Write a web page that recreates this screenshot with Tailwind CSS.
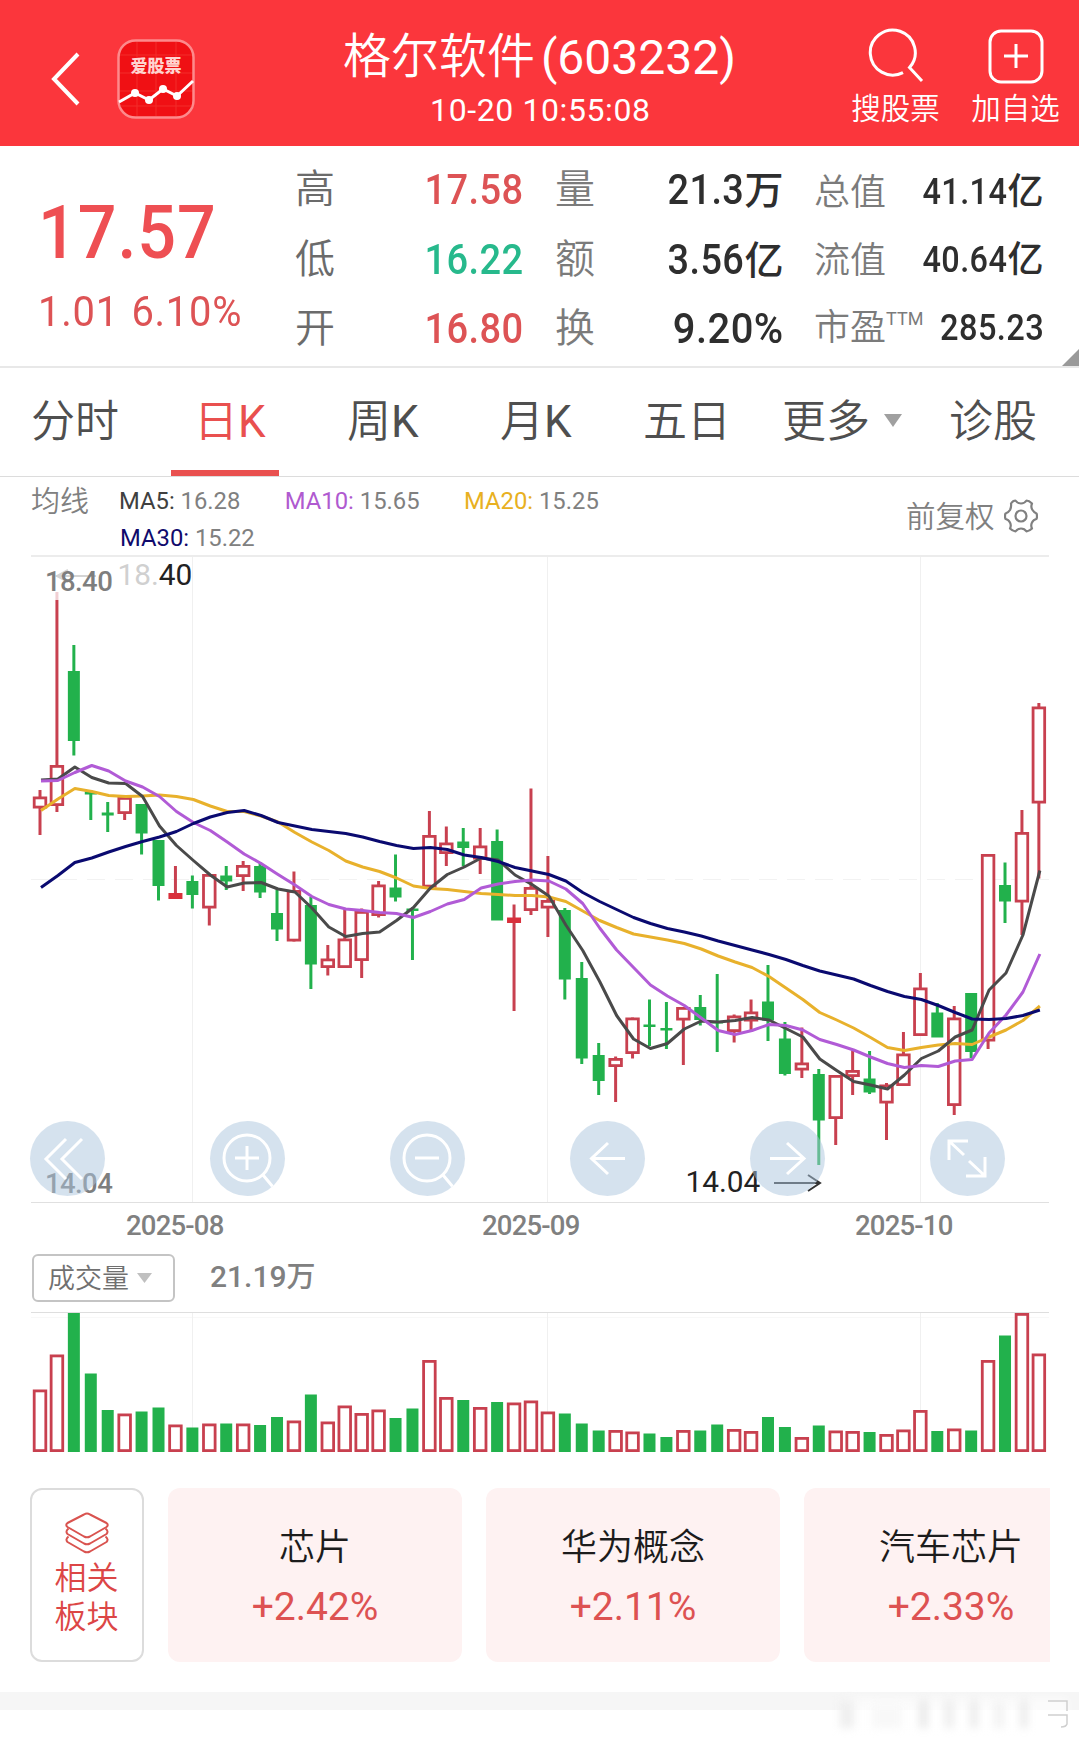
<!DOCTYPE html>
<html lang="zh-CN">
<head>
  <meta charset="UTF-8">
  <title>格尔软件(603232)</title>
  <script src="https://cdn.jsdelivr.net/npm/@tailwindcss/browser@4"></script>
</head>
<body class="bg-white font-[Roboto,'Noto_Sans_CJK_SC',sans-serif] w-[1079px] h-[1738px] overflow-hidden">

  <!-- header -->
  <header class="flex h-[146px] bg-[#fb363c] text-white">
    <div class="w-[240px] flex items-center pt-3 pl-[50px]">
      <svg class="w-[32px] h-[56px]" viewBox="0 0 32 56" fill="none" stroke="#fff" stroke-width="4"><path d="M28 3L4 28L28 53"/></svg>
      <svg class="w-[78px] h-[80px] ml-[35px]" viewBox="0 0 78 80">
        <rect x="1.5" y="1.5" width="75" height="77" rx="17" fill="#f01014" stroke="#fd8a8c" stroke-width="2.5"/>
        <path d="M20 3V77M39 3V77M59 3V77M3 16H75M3 34H75M3 52H75M3 67H75" stroke="#f5403a" stroke-width="1" opacity=".6"/>
        <text x="39" y="33" text-anchor="middle" font-size="17" font-weight="900" fill="#ffd4d0" font-family="Noto Sans CJK SC">爱股票</text>
        <path d="M2 63L18 54L32 61L46 50L60 57L76 42" fill="none" stroke="#fff" stroke-width="3"/>
        <g fill="#fff"><circle cx="18" cy="54" r="4"/><circle cx="32" cy="61" r="4"/><circle cx="46" cy="50" r="4"/><circle cx="60" cy="57" r="4"/></g>
      </svg>
    </div>
    <div class="w-[600px] flex flex-col items-center pt-6">
      <h1 class="text-[48px] leading-[66px] font-[350] flex"><span>格尔软件</span><span class="pl-[6px] pt-px font-normal">(603232)</span></h1>
      <div class="text-[32px] leading-[40px] tracking-[0.6px] -mt-[1px] pl-[2px]">10-20 10:55:08</div>
    </div>
    <div class="flex pt-[28px]">
      <div class="w-[113px] flex flex-col items-center">
        <svg class="w-[56px] h-[56px]" viewBox="0 0 56 56" fill="none" stroke="#fff" stroke-width="3"><path d="M35 44.6A22.5 22.5 0 1 1 41.5 39.6L54 53"/></svg>
        <span class="text-[29.5px] leading-[44px] mt-[3px] font-[350]">搜股票</span>
      </div>
      <div class="w-[127px] flex flex-col items-center">
        <svg class="w-[56px] h-[56px]" viewBox="0 0 56 56" fill="none" stroke="#fff" stroke-width="3"><rect x="2" y="3" width="52" height="51" rx="11"/><path d="M28 16V40M16 28H40"/></svg>
        <span class="text-[29.5px] leading-[44px] mt-[3px] font-[350]">加自选</span>
      </div>
    </div>
  </header>

  <!-- quote -->
  <section class="relative flex h-[222px] border-b-2 border-[#e8e8e8] text-[#2e2e2e]">
    <div class="w-[295px] pl-[38px] pt-[41px] text-[#ee4f53]">
      <div class="text-[75px] leading-[90px] font-medium tracking-[1px] origin-left scale-x-[.91]">17.57</div>
      <div class="text-[42px] leading-[56px] mt-[7px] tracking-[0.8px] origin-left scale-x-[.95] text-[#dd5355] whitespace-nowrap">1.01 <span class="ml-[2px]">6.10%</span></div>
    </div>
    <div class="w-[229px] pt-[9px] text-[42px] font-medium tracking-[0.5px]">
      <div class="flex justify-between items-center h-[69.5px]"><span class="text-[40px] font-[350] text-[#6b6b6b] pt-px">高</span><span class="origin-right scale-x-[.905] text-[#dd5355]">17.58</span></div>
      <div class="flex justify-between items-center h-[69.5px]"><span class="text-[40px] font-[350] text-[#6b6b6b] pt-px">低</span><span class="origin-right scale-x-[.905] text-[#27b98c]">16.22</span></div>
      <div class="flex justify-between items-center h-[69.5px]"><span class="text-[40px] font-[350] text-[#6b6b6b] pt-px">开</span><span class="origin-right scale-x-[.905] text-[#dd5355]">16.80</span></div>
    </div>
    <div class="w-[229px] ml-[31px] pt-[9px] text-[42px] font-medium tracking-[0.5px]">
      <div class="flex justify-between items-center h-[69.5px]"><span class="text-[40px] font-[350] text-[#7b7b7b] pt-px">量</span><span><span class="inline-block origin-right scale-x-[.9]">21.3</span><span class="text-[39px]">万</span></span></div>
      <div class="flex justify-between items-center h-[69.5px]"><span class="text-[40px] font-[350] text-[#7b7b7b] pt-px">额</span><span><span class="inline-block origin-right scale-x-[.9]">3.56</span><span class="text-[39px]">亿</span></span></div>
      <div class="flex justify-between items-center h-[69.5px]"><span class="text-[40px] font-[350] text-[#7b7b7b] pt-px">换</span><span class="origin-right scale-x-[.95]">9.20%</span></div>
    </div>
    <div class="w-[230px] ml-[30px] pt-[12px] text-[36px] font-medium tracking-[0.5px]">
      <div class="flex justify-between items-center h-[68px]"><span class="font-[350] text-[#7b7b7b] tracking-normal pt-px">总值</span><span><span class="inline-block origin-right scale-x-[.9]">41.14</span>亿</span></div>
      <div class="flex justify-between items-center h-[68px]"><span class="font-[350] text-[#7b7b7b] tracking-normal pt-px">流值</span><span><span class="inline-block origin-right scale-x-[.9]">40.64</span>亿</span></div>
      <div class="flex justify-between items-center h-[68px]"><span class="font-[350] text-[#7b7b7b] tracking-normal flex">市盈<span class="text-[18px] leading-[36px] font-normal">TTM</span></span><span class="origin-right scale-x-[.905]">285.23</span></div>
    </div>
    <svg class="absolute right-0 bottom-0 w-[17px] h-[17px]" viewBox="0 0 17 17"><path d="M17 0V17H0z" fill="#999"/></svg>
  </section>

  <!-- period tabs -->
  <nav class="flex h-[109px] border-b border-[#dcdcdc] text-[44px] font-[350] text-[#4f4f4f] leading-[108px] whitespace-nowrap">
    <div class="w-[171px] pl-[31px]">分时</div>
    <div class="w-[108px] h-[108px] border-b-[6px] border-[#e9504f] text-[#e9504f] pl-[23px]">日<span class="font-normal">K</span></div>
    <div class="w-[152px] pl-[68px]">周<span class="font-normal">K</span></div>
    <div class="w-[152px] pl-[69px]">月<span class="font-normal">K</span></div>
    <div class="w-[199px] pl-[60px]">五日</div>
    <div class="w-[167px] flex items-center h-[108px]">更多<svg class="w-[18px] h-[14px] ml-[14px] mb-[2px]" viewBox="0 0 18 14"><path d="M0 0H18L9 13z" fill="#a0a0a0"/></svg></div>
    <div>诊股</div>
  </nav>

  <!-- moving averages -->
  <section class="flex h-[78px] px-[31px] text-[23.8px] text-[#808080]">
    <div class="w-[88px] text-[29px] font-[350] leading-[50px]">均线</div>
    <div class="w-[760px] pt-[6px]">
      <div class="flex gap-[44.5px] leading-[37px]">
        <div><span class="text-[#404040]">MA5:</span> 16.28</div>
        <div><span class="text-[#b05ad0]">MA10:</span> 15.65</div>
        <div><span class="text-[#e8b021]">MA20:</span> 15.25</div>
      </div>
      <div class="leading-[37px] pl-px"><span class="text-[#100a6c]">MA30:</span> 15.22</div>
    </div>
    <div class="flex items-center text-[29.5px] font-[350] pl-[27px] pt-[2px]">
      <span class="whitespace-nowrap">前复权</span>
      <svg class="w-[34px] h-[34px] ml-[9px] mb-[2px] shrink-0" viewBox="0 0 34 34" fill="none" stroke="#808080" stroke-width="2.2"><circle cx="17" cy="17" r="5.5"/><path stroke-linejoin="round" d="M7 4.5Q9 1.500 11.500 1.500Q13.500 4.500 17 4.500Q20.500 4.500 22.500 1.500Q25 1.500 28 4.500Q26.500 8 28.500 11Q30 13.500 32.500 14.500Q33.500 17 32.500 20Q29.500 20.500 28 23.500Q26.500 26.500 28 29.500Q25.500 32 22.500 32.500Q20.500 29.500 17 29.500Q13.500 29.500 11.500 32.500Q8.500 32 6 29.500Q7.500 26.500 6 23.500Q4.500 20.500 1.500 20Q.5 17 1.500 14.500Q4.500 13.500 6 11Q7.500 8 7 4.500z"/></svg>
    </div>
  </section>

  <!-- candles -->
  <section class="relative h-[649px] px-[31px]">
    <svg id="kline" class="w-[1018px] h-[649px]" viewBox="31 555 1018 649" font-family="Roboto">
      <path d="M31 556H1049" stroke="#ececec" stroke-width="2"/>
      <path d="M31 1202.500H1049" stroke="#e0e0e0"/>
      <path d="M192.500 557V1202M547.500 557V1202M920.500 557V1202" stroke="#f0f0f0"/>
      <path d="M31 879.500H1049" stroke="#f2f2f2" stroke-dasharray="18 10"/>
      <g id="candles"></g>
      <g id="averages" fill="none" stroke-width="3" stroke-linejoin="round"></g>
      <rect x="54" y="590" width="6" height="10" fill="#fff" opacity=".75"/>
      <path d="M56 576H96M68 570L57 576L68 582" stroke="#d4d4d4" stroke-width="2" fill="none"/>
      <text x="45" y="591" font-size="27.500" font-weight="500" letter-spacing="-.6" fill="#7e7e7e">18.40</text>
      <text x="117.500" y="584.500" font-size="29.800" fill="#222"><tspan fill="#d0d0d0">18.</tspan>40</text>
      <text x="45" y="1193" font-size="27.500" font-weight="500" letter-spacing="-.6" fill="#7e7e7e">14.04</text>
      <text x="685.500" y="1192" font-size="29.800" fill="#222">14.04</text>
      <path d="M774 1183H820M808 1175L820 1183L808 1191" stroke="#333" stroke-width="2" fill="none"/>
    </svg>
    <div class="absolute left-[30px] top-[566px] flex gap-[105px]">
      <svg class="w-[75px] h-[75px] rounded-full bg-[#acc6dd]/50" viewBox="0 0 75 75" fill="none" stroke="#fff" stroke-width="3"><path d="M36 18L16 38L36 58M52 18L32 38L52 58"/></svg>
      <svg class="w-[75px] h-[75px] rounded-full bg-[#acc6dd]/50" viewBox="0 0 75 75" fill="none" stroke="#fff" stroke-width="3"><circle cx="37" cy="37" r="23"/><path d="M37 25V49M25 37H49M53 54L63 66"/></svg>
      <svg class="w-[75px] h-[75px] rounded-full bg-[#acc6dd]/50" viewBox="0 0 75 75" fill="none" stroke="#fff" stroke-width="3"><circle cx="37" cy="37" r="23"/><path d="M25 37H49M53 54L63 66"/></svg>
      <svg class="w-[75px] h-[75px] rounded-full bg-[#acc6dd]/50" viewBox="0 0 75 75" fill="none" stroke="#fff" stroke-width="3"><path d="M55 37.500H21M38 22L21.500 37.500L38 53"/></svg>
      <svg class="w-[75px] h-[75px] rounded-full bg-[#acc6dd]/50" viewBox="0 0 75 75" fill="none" stroke="#fff" stroke-width="3"><path d="M20 37.500H54M37 22L54 37.500L37 53"/></svg>
      <svg class="w-[75px] h-[75px] rounded-full bg-[#acc6dd]/50" viewBox="0 0 75 75" fill="none" stroke="#fff" stroke-width="3"><path d="M19 39V20H38M19 20L34 34M39 40L55 55M55 36V55H36"/></svg>
    </div>
  </section>
  <div class="flex h-[50px] pl-[126px] text-[27.5px] leading-[44px] font-medium text-[#808080] tracking-[-0.8px]">
    <span class="w-[356px]">2025-08</span>
    <span class="w-[373px]">2025-09</span>
    <span>2025-10</span>
  </div>

  <!-- volume -->
  <div class="flex items-center h-[48px] pl-[32px]">
    <div class="flex items-center w-[143px] h-[48px] border-2 border-[#c4c4c4] rounded-md pl-[14px] text-[27px] font-[350] text-[#707070]"><span class="pt-[3px]">成交量</span><svg class="w-[15px] h-[10px] ml-[8px]" viewBox="0 0 15 10"><path d="M0 0H15L7.500 10z" fill="#c0c0c0"/></svg></div>
    <div class="pl-[35px] pb-[2px] text-[30px] font-medium text-[#808080]">21.19<span class="text-[29px]">万</span></div>
  </div>
  <svg id="volume" class="w-[1018px] h-[144px] ml-[31px] mt-[10px]" viewBox="31 1312 1018 144">
    <path d="M31 1312.500H1049" stroke="#dedede"/>
    <path d="M31 1317.500H1049" stroke="#f8f8f8"/>
    <path d="M192.500 1313V1452M547.500 1313V1452M920.500 1313V1452" stroke="#f0f0f0"/>
  </svg>

  <!-- related sectors -->
  <section class="flex h-[174px] mt-[32px] ml-[30px] mr-[29px] overflow-hidden">
    <div class="w-[114px] shrink-0 border-2 border-[#dcdcdc] rounded-xl flex flex-col items-center pt-[22px] pr-[1px] text-[32px] leading-[39px] font-[350] text-[#dc4646]">
      <svg class="w-[44px] h-[42px] mb-[5px]" viewBox="0 0 44 42" fill="none" stroke="#d9534f" stroke-width="2" stroke-linejoin="round"><path d="M22 1.500Q23.500 1.500 25 2.500L41.500 11Q44 13 41.500 15L25 24.500Q22 26 19 24.500L2.500 15Q0 13 2.500 11L19 2.500Q20.500 1.500 22 1.500z"/><path d="M3.500 16.500Q0 19.500 2.500 22L19 31.500Q22 33 25 31.500L41.500 22Q44 19.500 40.500 16.500"/><path d="M3.500 24.500Q0 27.500 2.500 30L19 39.500Q22 41 25 39.500L41.500 30Q44 27.500 40.500 24.500"/></svg>
      <span>相关</span>
      <span>板块</span>
    </div>
    <div class="w-[294px] shrink-0 ml-[24px] rounded-xl bg-[#fef2f2] text-center pt-[33px]">
      <div class="text-[36px] leading-[54px] font-[350] text-[#1c1c1c]">芯片</div>
      <div class="text-[39px] leading-[46px] mt-[9px] text-[#dd5252]">+2.42%</div>
    </div>
    <div class="w-[294px] shrink-0 ml-[24px] rounded-xl bg-[#fef2f2] text-center pt-[33px]">
      <div class="text-[36px] leading-[54px] font-[350] text-[#1c1c1c]">华为概念</div>
      <div class="text-[39px] leading-[46px] mt-[9px] text-[#dd5252]">+2.11%</div>
    </div>
    <div class="w-[294px] shrink-0 ml-[24px] rounded-xl bg-[#fef2f2] text-center pt-[33px]">
      <div class="text-[36px] leading-[54px] font-[350] text-[#1c1c1c]">汽车芯片</div>
      <div class="text-[39px] leading-[46px] mt-[9px] text-[#dd5252]">+2.33%</div>
    </div>
  </section>
  <div class="relative mt-[30px] h-[18px] bg-[#f6f6f6]">
    <div class="absolute left-[840px] top-[6px] w-[228px] h-[30px] bg-white/60 flex items-end gap-[18px] blur-[4px]">
      <span class="w-[14px] h-[28px] bg-[#eeeeee]"></span>
      <span class="w-[30px] h-[24px] bg-[#f8f8f8]"></span>
      <span class="w-[7px] h-[28px] bg-[#e4e4e4]"></span>
      <span class="w-[8px] h-[28px] bg-[#ebebeb]"></span>
      <span class="w-[6px] h-[28px] bg-[#e6e6e6]"></span>
      <span class="w-[8px] h-[26px] bg-[#f0f0f0]"></span>
      <span class="w-[6px] h-[28px] bg-[#e6e6e6]"></span>
    </div>
    <svg class="absolute left-[1046px] top-[6px] w-[24px] h-[32px]" viewBox="0 0 24 32" fill="none" stroke="#cfcfcf" stroke-width="1.500"><path d="M2 3H21V13M2 17H21V26Q20 29 15 29"/></svg>
  </div>

  <script>
    // [up, high, low, body top, body bottom, volume top]
    const days = [
      [1,790,835,796.5,808.5,1389.5],[1,592,812,765,806,1354.5],[0,645,755.5,671,741,1313],[0,790,820,791.5,794.5,1373.5],
      [0,802,832,812.5,815.5,1410],[1,797,820,797,814,1413.5],[0,804,854.5,804,833.5,1411.5],[0,840,900.5,840,886,1407.5],
      [1,866,898.5,893,899,1424.5],[0,875.5,908.5,881,895,1427.5],[1,874,925.5,874,908.5,1423.5],[0,866,890,875.5,881.5,1423.5],
      [1,861,891,865,877,1423.5],[0,862,898,866,892.5,1425],[0,889.5,941,913,929.5,1417],[1,871.5,941.5,890,941.5,1420.5],
      [0,897,989,905,964.5,1394.5],[1,945,975.5,958.5,968,1421.5],[1,909,968,938.5,968,1405.5],[1,908.5,978,911,961,1413],
      [1,881,917.5,884.5,916,1409.5],[0,854.5,901.5,887.5,897.5,1418],[0,907.5,960,908.5,911,1408.5],[1,811,887,835,887.5,1360],
      [1,826.5,866,842.5,854,1397],[0,828,866,841.5,848,1400],[1,828,874,845.5,859.5,1407],[0,829.5,920,841,920.5,1402],
      [1,904.5,1011,917.5,923,1402.5],[1,788.5,915,887,911,1400.5],[1,856,937,900,908.5,1411.5],[0,908,999.5,910,979.5,1413.5],
      [0,962,1064,978,1058.5,1423.5],[0,1043,1095,1055,1081,1430.5],[1,1056.5,1102,1058,1067,1430],[1,1017.5,1058.5,1017.5,1054,1431.5],
      [0,999.5,1046,1024.5,1027,1433.5],[0,1002,1049,1028,1030.5,1437],[1,1007,1065,1007,1020.5,1430],[0,995,1025.5,1007,1020,1430.5],
      [0,974,1052,1021.5,1023.5,1424.5],[1,1014.5,1042.5,1015.5,1032,1429],[1,999.5,1031.5,1011.5,1021.5,1431],[0,965,1041,1001.5,1020.5,1417],
      [0,1022,1075.5,1038.5,1074,1427],[1,1027.5,1078,1062.5,1070.5,1437],[0,1069,1165,1074,1120.5,1425.5],[1,1075,1145,1075,1119,1430.5],
      [1,1050.5,1095,1070,1077,1431],[0,1051,1094,1078.5,1092.5,1432],[1,1083,1140,1084.5,1103.5,1434],[1,1032,1086,1053.5,1086,1429.5],
      [1,973,1036,987.5,1036,1410],[0,1003,1037,1012.5,1037.5,1431],[1,1006,1115,1017.5,1106,1428.5],[0,993,1058,993,1052,1430.5],
      [1,854,1049,854,1041.5,1360],[0,862.5,923,885,901.5,1335.5],[1,810,935,832,902.5,1313],[1,703,878.5,706.5,803.5,1353.5]
    ]
    const averages = {
      '#e8b12c': [810.5,799,788.5,791.5,795.5,796.5,796,795,796.5,799.5,806,811.5,811.5,816,822,832.5,842,850.5,861,867,871.5,878,886,888.5,889.5,891.5,893.5,894.5,895.5,895.5,897,901.5,911,920.5,927.5,934,937,940,943.5,949,956,962,967.5,976.5,988,999.5,1012.5,1020,1028,1037.5,1047.5,1050.5,1047.5,1045,1043.5,1044.5,1037,1030,1020.5,1006],
      '#4a4a4a': [780,779,767,777.5,783,783.5,796.5,826,845.5,860.5,875,887,883,882.5,889,892,908,927,936.5,933.5,932,920.5,907.5,888,874.5,867,858,860,875,884.5,896,925,950.5,981.5,1015.5,1039,1048.5,1043.5,1029,1021,1022,1020.5,1017.5,1020,1028.5,1037,1059,1070.5,1081.5,1085,1089,1075,1058.5,1051,1037,1030,990,973,935,870.5],
      '#b15bd6': [781,780.5,772.5,765.5,771,781,787,796.5,811.5,822.5,830.5,842,854,863.5,874.5,885,896.5,904.5,909,910.5,912.5,913.5,917.5,911.5,904,899.5,888,884,881.5,880,881,889,903.5,928,950,967.5,985,996,1005.5,1018,1030.5,1034.5,1030.5,1024.5,1025.5,1030,1039.5,1044.5,1050,1057,1063.5,1067.5,1065.5,1066.5,1061,1059.5,1033,1015,992,954],
      '#0a0a70': [887.5,875.5,862.5,858,852,846.5,841.5,837,831.5,823.5,817,812.5,810.5,815.5,822.5,826,829.5,831.5,833.5,837,841.5,845.5,848.5,847.5,849.5,855,857.5,861.5,867.5,871,874.5,881,892.5,901.5,909.5,917.5,923.5,928.5,932,936,941,945.5,950,954.5,959.5,965.5,971,975,979,985.5,991.5,996.5,999.5,1005.5,1012.5,1019,1019.5,1018.5,1015.5,1010]
    }
    const red = '#c8404f', green = '#22b14c'
    const box = (x, up, top, bottom) => {
      if (!up) return `<rect x="${x - 6}" y="${top}" width="12" height="${bottom - top}" fill="${green}"/>`
      if (bottom - top < 7) return `<rect x="${x - 7}" y="${top}" width="14" height="${bottom - top}" fill="#d9303c"/>`
      return `<rect x="${x - 5.8}" y="${top + 1.4}" width="11.6" height="${bottom - top - 2.8}" fill="#fff" stroke="${red}" stroke-width="2.8"/>`
    }
    let candles = ''
    let volume = ''
    days.forEach(([up, high, low, top, bottom, vol], i) => {
      const x = 40 + i * 16.93
      candles += `<path d="M${x} ${high}V${low}" stroke="${up ? red : green}" stroke-width="3"/>` + box(x, up, top, bottom)
      volume += box(x, up, vol, 1452)
    })
    document.getElementById('candles').innerHTML = candles
    document.getElementById('volume').innerHTML += volume
    document.getElementById('averages').innerHTML = Object.entries(averages).map(([color, ys]) =>
      `<polyline stroke="${color}" points="${ys.map((y, i) => `${41 + i * 16.93},${y}`).join(' ')}"/>`).join('')
  </script>
</body>
</html>
